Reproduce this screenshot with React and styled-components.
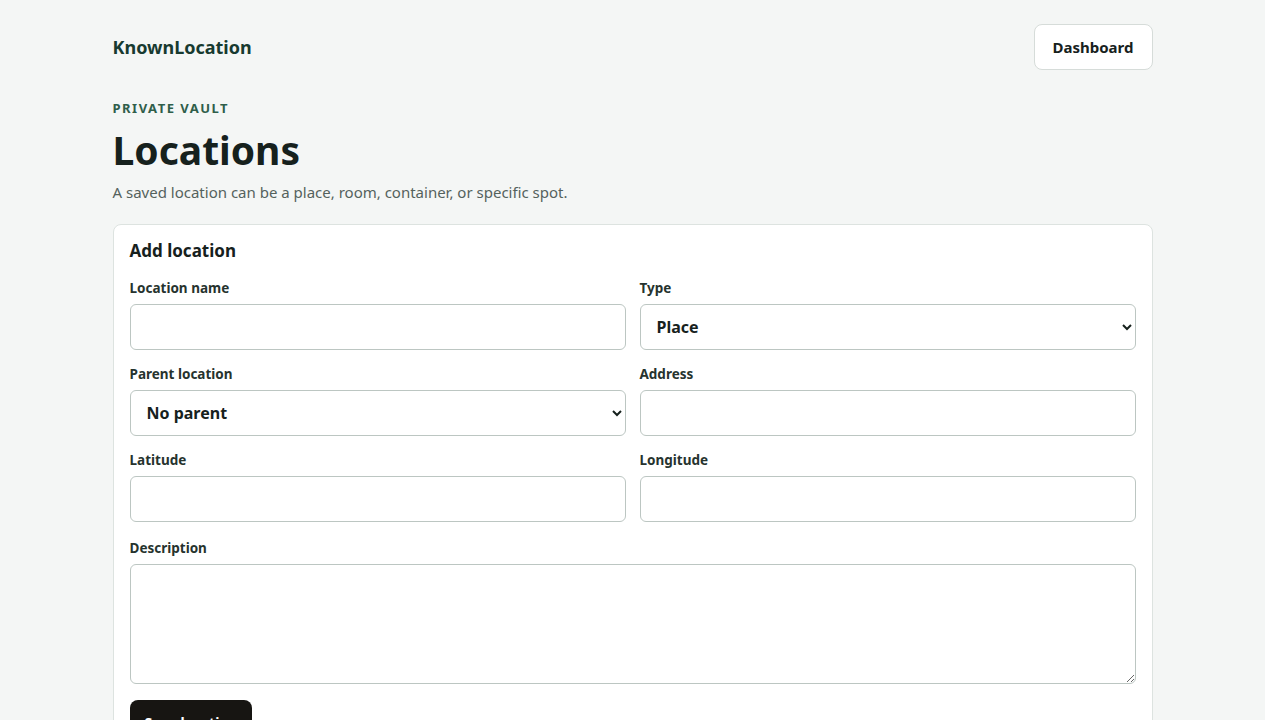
import styled, { createGlobalStyle } from 'styled-components';

const GlobalStyle = createGlobalStyle`
  * {
    box-sizing: border-box;
  }
  body {
    margin: 0;
    background: #f4f6f5;
    color: #16211d;
    font-family: 'Noto Sans', 'Open Sans', sans-serif;
  }
`;

const Page = styled.div`
  max-width: 1040px;
  margin: 0 auto;
  padding: 24px 0 40px;
`;

const TopBar = styled.header`
  display: flex;
  align-items: center;
  justify-content: space-between;
  height: 46px;
`;

const Brand = styled.div`
  font-size: 18px;
  font-weight: 700;
  color: #173a30;
`;

const NavButton = styled.button`
  height: 46px;
  padding: 0 18px;
  background: #fff;
  border: 1px solid #d6dcd9;
  border-radius: 8px;
  font-family: inherit;
  font-size: 15px;
  font-weight: 700;
  color: #16211d;
  cursor: pointer;
`;

const Intro = styled.section`
  margin-top: 29px;
`;

const Eyebrow = styled.div`
  font-size: 13px;
  line-height: 18px;
  font-weight: 700;
  letter-spacing: 1.5px;
  color: #2f5e4a;
`;

const Title = styled.h1`
  margin: 7px 0 6px;
  font-size: 39px;
  line-height: 52px;
  font-weight: 700;
  color: #16211d;
`;

const Subtitle = styled.p`
  margin: 0;
  font-size: 15px;
  line-height: 20px;
  color: #54625d;
`;

const Card = styled.form`
  margin-top: 22px;
  background: #fff;
  border: 1px solid #dde3e0;
  border-radius: 8px;
  padding: 13px 16px 16px;
`;

const CardTitle = styled.h2`
  margin: 0 0 15px;
  font-size: 17px;
  line-height: 26px;
  font-weight: 700;
`;

const Grid = styled.div`
  display: grid;
  grid-template-columns: 1fr 1fr;
  column-gap: 14px;
  row-gap: 15px;
`;

const Field = styled.label`
  display: flex;
  flex-direction: column;
  gap: 7px;
  grid-column: ${(p) => (p.wide ? '1 / -1' : 'auto')};
  margin-top: ${(p) => (p.wide ? '2px' : '0')};
`;

const LabelText = styled.span`
  font-size: 13.5px;
  line-height: 18px;
  font-weight: 700;
  color: #26332e;
`;

const Input = styled.input`
  height: 46px;
  padding: 0 16px;
  background: #fff;
  border: 1px solid #bcc6c2;
  border-radius: 6px;
  font-family: inherit;
  font-size: 15px;
  color: #16211d;
`;

const Select = styled.select`
  height: 46px;
  padding: 0 8px 0 12px;
  background: #fff;
  border: 1px solid #bcc6c2;
  border-radius: 6px;
  font-family: inherit;
  font-size: 16px;
  font-weight: 700;
  color: #16211d;
`;

const TextArea = styled.textarea`
  height: 120px;
  padding: 12px 16px;
  background: #fff;
  border: 1px solid #bcc6c2;
  border-radius: 6px;
  font-family: inherit;
  font-size: 15px;
  resize: vertical;
`;

const Submit = styled.button`
  margin-top: 16px;
  height: 44px;
  padding: 0 15px;
  background: #171512;
  color: #fff;
  border: none;
  border-radius: 8px;
  font-family: inherit;
  font-size: 14px;
  font-weight: 700;
  cursor: pointer;
`;

const App = () => {
  return (
    <>
      <GlobalStyle />
      <Page>
        <TopBar>
          <Brand>KnownLocation</Brand>
          <NavButton type="button">Dashboard</NavButton>
        </TopBar>
        <Intro>
          <Eyebrow>PRIVATE VAULT</Eyebrow>
          <Title>Locations</Title>
          <Subtitle>A saved location can be a place, room, container, or specific spot.</Subtitle>
        </Intro>
        <Card onSubmit={(e) => e.preventDefault()}>
          <CardTitle>Add location</CardTitle>
          <Grid>
            <Field>
              <LabelText>Location name</LabelText>
              <Input type="text" />
            </Field>
            <Field>
              <LabelText>Type</LabelText>
              <Select defaultValue="place">
                <option value="place">Place</option>
                <option value="room">Room</option>
                <option value="container">Container</option>
                <option value="spot">Spot</option>
              </Select>
            </Field>
            <Field>
              <LabelText>Parent location</LabelText>
              <Select defaultValue="">
                <option value="">No parent</option>
              </Select>
            </Field>
            <Field>
              <LabelText>Address</LabelText>
              <Input type="text" />
            </Field>
            <Field>
              <LabelText>Latitude</LabelText>
              <Input type="text" />
            </Field>
            <Field>
              <LabelText>Longitude</LabelText>
              <Input type="text" />
            </Field>
            <Field wide>
              <LabelText>Description</LabelText>
              <TextArea />
            </Field>
          </Grid>
          <Submit type="submit">Save location</Submit>
        </Card>
      </Page>
    </>
  );
};

export default App;
